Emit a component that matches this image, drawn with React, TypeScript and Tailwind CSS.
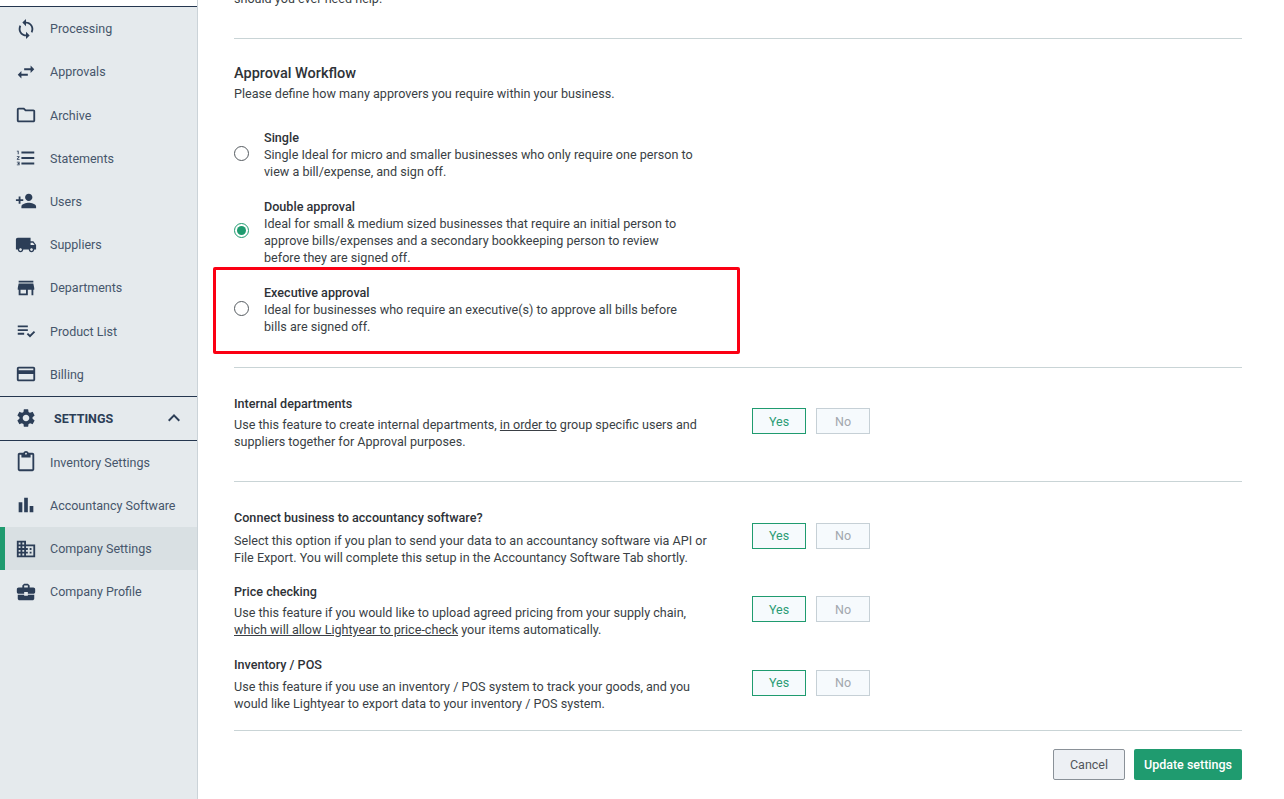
import type { ReactNode } from 'react'
import type { IconType } from 'react-icons'
import {
  MdSync,
  MdSwapHoriz,
  MdOutlineFolder,
  MdFormatListNumbered,
  MdPersonAdd,
  MdLocalShipping,
  MdStore,
  MdPlaylistAddCheck,
  MdOutlineCreditCard,
  MdSettings,
  MdKeyboardArrowUp,
  MdOutlineContentPaste,
  MdBarChart,
  MdDomain,
  MdBusinessCenter,
} from 'react-icons/md'

type NavItem = {
  label: string
  icon: IconType
  active?: boolean
}

const topItems: NavItem[] = [
  { label: 'Processing', icon: MdSync },
  { label: 'Approvals', icon: MdSwapHoriz },
  { label: 'Archive', icon: MdOutlineFolder },
  { label: 'Statements', icon: MdFormatListNumbered },
  { label: 'Users', icon: MdPersonAdd },
  { label: 'Suppliers', icon: MdLocalShipping },
  { label: 'Departments', icon: MdStore },
  { label: 'Product List', icon: MdPlaylistAddCheck },
  { label: 'Billing', icon: MdOutlineCreditCard },
]

const settingsItems: NavItem[] = [
  { label: 'Inventory Settings', icon: MdOutlineContentPaste },
  { label: 'Accountancy Software', icon: MdBarChart },
  { label: 'Company Settings', icon: MdDomain, active: true },
  { label: 'Company Profile', icon: MdBusinessCenter },
]

function NavRow({ item }: { item: NavItem }) {
  const Icon = item.icon
  return (
    <div className={`flex h-[43.2px] items-center ${item.active ? 'bg-[#d9e0e3]' : ''}`}>
      <div className={`flex h-full w-[5px] shrink-0 ${item.active ? 'bg-[#1f9b6f]' : ''}`} />
      <div className="flex w-[45px] shrink-0 justify-start pl-[10px]">
        <Icon className="text-[#2c3e57]" size={22} />
      </div>
      <span className="mt-[2px] text-[12.5px] text-[#46566b]">{item.label}</span>
    </div>
  )
}

function Sidebar() {
  return (
    <aside className="h-[799px] w-[198px] shrink-0 border-r border-[#cbd3d8] bg-white">
      <div className="h-[6px]" />
      <div className="h-[793px] border-t border-[#24364f] bg-[#e5eaed]">
        {topItems.map((item) => (
          <NavRow key={item.label} item={item} />
        ))}
        <div className="flex h-[45px] items-center border-y border-[#24364f] pl-[15px]">
          <MdSettings className="text-[#2c3e57]" size={22} />
          <span className="mt-[2px] ml-[17px] text-[12.5px] font-bold text-[#2c3e57]">SETTINGS</span>
          <MdKeyboardArrowUp className="ml-[49px] text-[#2c3e57]" size={24} />
        </div>
        {settingsItems.map((item) => (
          <NavRow key={item.label} item={item} />
        ))}
      </div>
    </aside>
  )
}

function Radio({ checked }: { checked?: boolean }) {
  return (
    <span
      className={`flex h-[15px] w-[15px] shrink-0 items-center justify-center rounded-full border bg-white ${
        checked ? 'border-[#1f9b6f]' : 'border-[#555b60]'
      }`}
    >
      {checked && <span className="h-[9px] w-[9px] rounded-full bg-[#1f9b6f]" />}
    </span>
  )
}

function ApprovalOption({
  title,
  checked,
  className,
  children,
}: {
  title: string
  checked?: boolean
  className: string
  children: ReactNode
}) {
  return (
    <div className={`flex items-center ${className}`}>
      <div className="mb-[3px] w-[30px] shrink-0">
        <Radio checked={checked} />
      </div>
      <div className="w-[470px] text-[12.6px] leading-[17px] text-[#3a3f45]">
        <div className="font-medium text-[#2e3237]">{title}</div>
        {children}
      </div>
    </div>
  )
}

function YesNo({ lift, tight }: { lift: string; tight?: boolean }) {
  const offset = tight ? 'pt-[1px]' : 'pt-[3px]'
  return (
    <div className={`flex gap-[10px] text-[12.5px] ${lift}`}>
      <span className={`flex h-[26px] w-[54px] items-center justify-center border border-[#1f9b6f] bg-[#f6fafd] text-[#2b9c74] ${offset}`}>
        Yes
      </span>
      <span className={`flex h-[26px] w-[54px] items-center justify-center border border-[#c6d0d6] bg-[#f6fafd] text-[#a2a7ae] ${offset}`}>
        No
      </span>
    </div>
  )
}

function ToggleRow({
  title,
  className,
  titleGap,
  lift = 'mb-[4px]',
  tight,
  children,
}: {
  title: string
  className: string
  titleGap: string
  lift?: string
  tight?: boolean
  children: ReactNode
}) {
  return (
    <div className={`flex items-center ${className}`}>
      <div className="w-[518px] shrink-0 text-[12.6px] leading-[17px] text-[#3a3f45]">
        <div className={`font-medium text-[#2e3237] ${titleGap}`}>{title}</div>
        {children}
      </div>
      <YesNo lift={lift} tight={tight} />
    </div>
  )
}

export default function App() {
  return (
    <div className="relative flex h-[799px] w-[1284px] overflow-hidden bg-white font-['Roboto',sans-serif]">
      <Sidebar />
      <main className="w-[1044px] pl-[36px]">
        <div className="-mt-[10px] h-[49px] w-[1008px] border-b border-[#c9d4d6] text-[12.6px] leading-[17px] text-[#3a3f45]">
          should you ever need help.
        </div>

        <h2 className="mt-[26px] text-[14.5px] leading-[17px] font-medium text-[#2e3237]">Approval Workflow</h2>
        <p className="mt-[3px] text-[12.6px] leading-[17px] text-[#3a3f45]">
          Please define how many approvers you require within your business.
        </p>

        <ApprovalOption title="Single" className="mt-[27px]">
          Single Ideal for micro and smaller businesses who only require one person to
          <br />
          view a bill/expense, and sign off.
        </ApprovalOption>
        <ApprovalOption title="Double approval" checked className="mt-[18px]">
          Ideal for small &amp; medium sized businesses that require an initial person to
          <br />
          approve bills/expenses and a secondary bookkeeping person to review
          <br />
          before they are signed off.
        </ApprovalOption>
        <ApprovalOption title="Executive approval" className="mt-[18px]">
          Ideal for businesses who require an executive(s) to approve all bills before
          <br />
          bills are signed off.
        </ApprovalOption>

        <div className="mt-[32px] w-[1008px] border-t border-[#c9d4d6]" />
        <ToggleRow title="Internal departments" className="mt-[27px]" titleGap="mb-[4px]">
          Use this feature to create internal departments, <span className="underline">in order to</span> group specific users and
          <br />
          suppliers together for Approval purposes.
        </ToggleRow>
        <div className="mt-[31px] w-[1008px] border-t border-[#c9d4d6]" />

        <ToggleRow title="Connect business to accountancy software?" className="mt-[27px]" titleGap="mb-[6px]" tight>
          Select this option if you plan to send your data to an accountancy software via API or
          <br />
          File Export. You will complete this setup in the Accountancy Software Tab shortly.
        </ToggleRow>
        <ToggleRow title="Price checking" className="mt-[17px]" titleGap="mb-[4px]">
          Use this feature if you would like to upload agreed pricing from your supply chain,
          <br />
          <span className="underline">which will allow Lightyear to price-check</span> your items automatically.
        </ToggleRow>
        <ToggleRow title="Inventory / POS" className="mt-[18px]" titleGap="mb-[5px]" lift="mb-[2px]" tight>
          Use this feature if you use an inventory / POS system to track your goods, and you
          <br />
          would like Lightyear to export data to your inventory / POS system.
        </ToggleRow>

        <div className="mt-[18px] w-[1008px] border-t border-[#c9d4d6]" />
        <div className="mt-[18px] flex w-[1008px] justify-end gap-[9px]">
          <button className="h-[31px] w-[72px] rounded-[2px] border border-[#8a9198] bg-[#edf0f4] pt-[2px] text-[12.5px] text-[#50555b]">
            Cancel
          </button>
          <button className="h-[31px] w-[108px] rounded-[2px] bg-[#1f9b6f] pt-[2px] text-[12.5px] font-medium text-white">
            Update settings
          </button>
        </div>
      </main>

      {/* review annotation over the page */}
      <div className="absolute top-[267px] left-[213px] h-[87px] w-[527px] rounded-[2px] border-[3px] border-[#fb0013]" />
    </div>
  )
}
